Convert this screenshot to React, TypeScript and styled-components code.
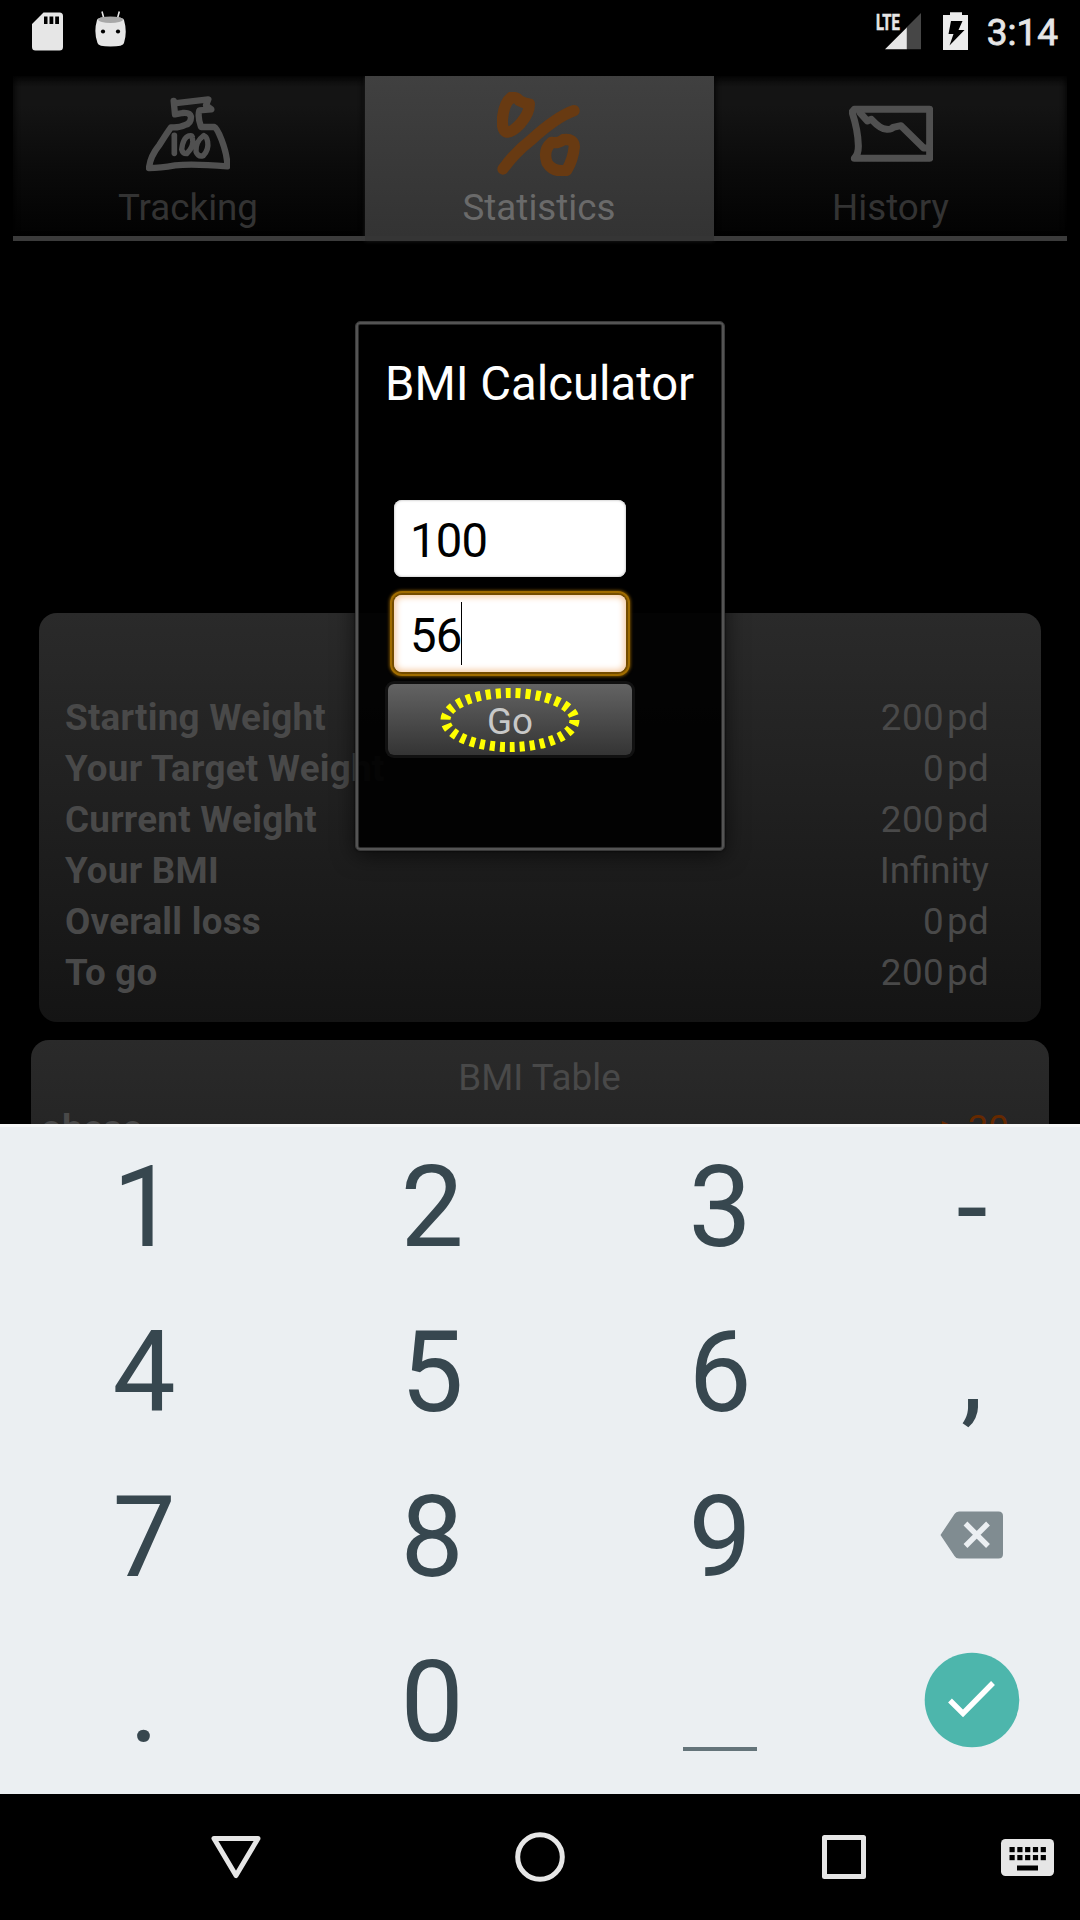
import React from 'react';
import styled, { createGlobalStyle } from 'styled-components';

const GlobalStyle = createGlobalStyle`
  html, body { margin: 0; padding: 0; background: #000; }
  * { box-sizing: border-box; }
  body { font-family: Roboto, "Liberation Sans", sans-serif; }
`;

const Screen = styled.div`
  position: relative;
  width: 1080px;
  height: 1920px;
  overflow: hidden;
  background: #000;
  display: flex;
  flex-direction: column;
`;

/* ---------- status bar ---------- */
const StatusBar = styled.header`
  height: 76px;
  flex: none;
  display: flex;
  justify-content: space-between;
  align-items: flex-start;
  padding: 0 22px 0 32px;
`;

const StatusGroup = styled.div`
  display: flex;
  align-items: flex-start;
  height: 64px;
`;

const StatusIcon = styled.svg<{ $gap?: number }>`
  display: block;
  flex: none;
  margin-right: ${(p) => p.$gap ?? 0}px;
`;

const Signal = styled.div`
  display: flex;
  height: 64px;
  padding-top: 8px;
  margin-right: 22px;
`;

const NetworkType = styled.span`
  display: block;
  width: 9px;
  font-size: 22.5px;
  font-weight: 700;
  line-height: 28px;
  color: #e6e6e6;
  -webkit-text-stroke: 0.6px #e6e6e6;
  transform: scaleX(0.655);
  transform-origin: 0 0;
  white-space: nowrap;
`;

const Clock = styled.time`
  font-size: 37px;
  font-weight: 400;
  -webkit-text-stroke: 0.8px #e6e6e6;
  line-height: 66px;
  color: #e6e6e6;
`;

/* ---------- tabs ---------- */
const TabBar = styled.nav`
  flex: none;
  height: 165px;
  margin: 0 13px;
  display: grid;
  grid-template-columns: 352px 349px 353px;
`;

const Tab = styled.div<{ $active?: boolean; $shift?: number }>`
  display: flex;
  flex-direction: column;
  align-items: center;
  padding: 16px ${(p) => p.$shift ?? 0}px 0 0;
  color: ${(p) => (p.$active ? '#6a6a6a' : '#333')};
  border-bottom: 5px solid ${(p) => (p.$active ? '#353535' : '#3b3b3b')};
  background: ${(p) =>
    p.$active
      ? 'linear-gradient(#404040, #333)'
      : 'linear-gradient(#070707, #141414 7%, #141414 18%, #0a0a0a 60%, #020202)'};
  box-shadow: ${(p) =>
    p.$active ? '0 0 4px rgba(60, 60, 60, 0.5)' : 'inset 3px 0 4px rgba(0, 0, 0, 0.5), inset -3px 0 4px rgba(0, 0, 0, 0.5)'};
  clip-path: inset(0 -4px -4px -4px);
`;

const TabIcon = styled.svg`
  display: block;
  width: 84px;
  height: 84px;
`;

const TabLabel = styled.span`
  margin-top: 9px;
  font-size: 36.75px;
  line-height: 45px;
`;

/* ---------- cards ---------- */
const Content = styled.main`
  flex: none;
  height: 883px;
  overflow: hidden;
  padding-top: 372px;
  display: flex;
  flex-direction: column;
  align-items: center;
  gap: 18px;
`;

const Card = styled.section<{ $width: number; $height: number; $pad: string }>`
  flex: none;
  width: ${(p) => p.$width}px;
  height: ${(p) => p.$height}px;
  padding: ${(p) => p.$pad};
  border-radius: 18px;
  background: linear-gradient(#2a2a2a, #141414);
  color: #494949;
  font-size: 36.75px;
  line-height: 51px;
`;

const CardTitle = styled.div`
  margin-right: -29px;
  text-align: center;
`;

const Row = styled.div`
  display: flex;
  justify-content: space-between;
`;

const Label = styled.span`
  font-weight: 700;
  letter-spacing: 0.25px;
`;

const Value = styled.span<{ $alert?: boolean }>`
  display: flex;
  gap: 3px;
  color: ${(p) => (p.$alert ? '#662900' : 'inherit')};
`;

const Amount = styled.span<{ $numeric: boolean }>`
  letter-spacing: ${(p) => (p.$numeric ? 0.4 : 0)}px;
`;

const Unit = styled.span`
  letter-spacing: 0.3px;
`;

/* ---------- dialog ---------- */
const Dialog = styled.div`
  position: absolute;
  left: 355px;
  top: 321px;
  width: 370px;
  height: 530px;
  padding: 34px 0 0 32px;
  border: 1px solid #3a3a3a;
  border-radius: 5px;
  background: rgba(0, 0, 0, 0.92);
  background-clip: padding-box;
  box-shadow: inset 0 0 0 2px #545454, inset 0 0 0 3px #2a2a2a, 0 4px 22px rgba(0, 0, 0, 0.6), 0 0 2px rgba(0, 0, 0, 0.9);
  display: flex;
  flex-direction: column;
  align-items: flex-start;
`;

const DialogTitle = styled.h1`
  margin: 0 0 88px -3px;
  font-size: 47.25px;
  line-height: 56px;
  font-weight: 400;
  color: #fff;
  white-space: nowrap;
`;

const Field = styled.div<{ $focused?: boolean }>`
  width: 232px;
  height: 77px;
  margin: 0 0 ${(p) => (p.$focused ? 12 : 18)}px 6px;
  padding: 4px 0 0 16px;
  display: flex;
  align-items: center;
  border-radius: 8px;
  background: #fff;
  color: #000;
  font-size: 47.25px;
  letter-spacing: -0.8px;
  box-shadow: ${(p) =>
    p.$focused
      ? 'inset 0 0 6px 2px #f6cba4, 0 0 0 2px #744c00, 0 0 0 4px #a06c00, 0 0 3px 5px #6b4700'
      : 'inset 0 0 2px 1px #d8d8d8'};
`;

const Caret = styled.i`
  width: 1px;
  height: 63px;
  margin: -4px 0 0 -1px;
  background: #000;
`;

const GoButton = styled.div`
  position: relative;
  width: 244px;
  height: 71px;
  display: flex;
  align-items: center;
  justify-content: center;
  padding-top: 4px;
  border-radius: 6px;
  background: linear-gradient(#636363, #343434);
  box-shadow: 0 0 0 3px #111;
  color: #c8c8c8;
  font-size: 36.75px;
`;

const Highlight = styled.svg`
  position: absolute;
  left: 50%;
  top: 50%;
  width: 140px;
  height: 66px;
  margin: -33px 0 0 -70px;
`;

/* ---------- keyboard ---------- */
const Keyboard = styled.div`
  flex: none;
  height: 670px;
  border-top: 3px solid #f6f8f8;
  background: #ebeff2;
  display: grid;
  grid-template-columns: 288px 288px 288px 216px;
  grid-auto-rows: 165px;
`;

const Key = styled.div<{ $drawn: boolean }>`
  display: flex;
  align-items: center;
  justify-content: center;
  padding-bottom: ${(p) => (p.$drawn ? 9 : 4)}px;
  color: #37474f;
  font-size: 112.5px;
  line-height: 159px;
`;

const SpaceMark = styled.i`
  width: 74px;
  height: 4px;
  margin-top: 98px;
  background: #64747a;
`;

/* ---------- navigation ---------- */
const NavBar = styled.footer`
  flex: none;
  height: 126px;
  display: flex;
  align-items: center;
  padding-left: 206px;
`;

const NavIcon = styled.svg<{ $gap: number }>`
  display: block;
  width: 60px;
  height: 60px;
  margin-right: ${(p) => p.$gap}px;
`;

const stats: [string, string, string?][] = [
  ['Starting Weight', '200', 'pd'],
  ['Your Target Weight', '0', 'pd'],
  ['Current Weight', '200', 'pd'],
  ['Your BMI', 'Infinity'],
  ['Overall loss', '0', 'pd'],
  ['To go', '200', 'pd'],
];

const Backspace = () => (
  <svg width="64" height="48" viewBox="0 0 64 48">
    <path d="M19 0.5H58.5Q63 0.5 63 5V43Q63 47.5 58.5 47.5H19Q16 47.5 14.5 45L0.5 24L14.5 3Q16 0.5 19 0.5Z" fill="#808c91" />
    <path d="M25.5 12.5L48 35M48 12.5L25.5 35" stroke="#ebeff2" strokeWidth="5.400" fill="none" />
  </svg>
);

const Confirm = () => (
  <svg width="96" height="96" viewBox="0 0 96 96">
    <circle cx="48" cy="48" r="47.3" fill="#4db6ac" />
    <path d="M26 48.500L39 61.500L69 31" stroke="#fff" strokeWidth="5.4" fill="none" />
  </svg>
);

const keys: React.ReactNode[] = [
  '1', '2', '3', '-',
  '4', '5', '6', ',',
  '7', '8', '9', <Backspace />,
  '.', '0', <SpaceMark />, <Confirm />,
];

export default function App() {
  return (
    <>
      <GlobalStyle />
      <Screen>
        <StatusBar>
          <StatusGroup>
            <StatusIcon width="31" height="64" viewBox="32 0 31 64" $gap={32}>
              <path fillRule="evenodd" fill="#e6e6e6" d="M43.5 12.5H59.5Q63 12.5 63 16V47Q63 50.5 59.5 50.5H35.5Q32 50.5 32 47V24ZM44 16.5V24H47.5V16.5ZM49.5 16.5V24H53.3V16.5ZM55.2 16.5V24H59V16.5Z" />
            </StatusIcon>
            <StatusIcon width="32" height="64" viewBox="95 0 32 64">
              <path d="M102 11.5L104 19M119.3 11.5L117.3 19" stroke="#e6e6e6" strokeWidth="1.6" />
              <path d="M97 20Q97 17 110.500 17Q124 17 124 20Q127.500 32 124 43Q123.500 46.600 110.500 46.600Q98 46.600 97.500 43Q93.500 32 97 20Z" fill="#e6e6e6" />
              <ellipse cx="110.5" cy="19.7" rx="12.3" ry="3.3" fill="#a8a8a8" />
              <circle cx="103" cy="31.500" r="2.100" fill="#000" />
              <circle cx="118" cy="31.500" r="2.100" fill="#000" />
            </StatusIcon>
          </StatusGroup>
          <StatusGroup>
            <Signal>
              <NetworkType>LTE</NetworkType>
              <StatusIcon width="36" height="56" viewBox="885 8 36 56">
                <path d="M906.500 27.500L921 13V49.300H906.500Z" fill="#464646" />
                <path d="M885 49.300L906.800 27.500V49.300Z" fill="#e6e6e6" />
              </StatusIcon>
            </Signal>
            <StatusIcon width="25" height="64" viewBox="943 0 25 64" $gap={19}>
              <path d="M950 12.300H962V15H968V50H943V15H950Z" fill="#ececec" />
              <path d="M951 21H962.500L958.500 30H964.500L949.500 45.500L953.500 34H948.500Z" fill="#000" />
            </StatusIcon>
            <Clock>3:14</Clock>
          </StatusGroup>
        </StatusBar>

        <TabBar>
          <Tab $shift={2}>
            <TabIcon viewBox="438 276 252 252" fill="none" stroke="#505050" strokeWidth="19" strokeLinejoin="round" strokeLinecap="round">
              <path d="M521 303L525 343L548 339Q570 337 573 350Q573 371 555 375Q538 384 513 382Q500 400 478 435Q450 470 447 504Q480 504 525 496Q580 491 682 499Q682 465 665 420Q651 384 643 381H603Q592 350 598 331L634 328L618 316L625 298L522 310" />
              <path d="M523 406V460" strokeWidth="17" />
              <path d="M571 407Q550 408 545 448Q548 461 560 461Q584 439 577 412Q576 406 571 407M611 407Q586 425 588 455Q595 472 610 467Q627 449 623 425Q620 409 611 407" strokeWidth="16" />
            </TabIcon>
            <TabLabel>Tracking</TabLabel>
          </Tab>
          <Tab $active $shift={1}>
            <TabIcon viewBox="441 276 252 252" fill="none" stroke="#683a12" strokeWidth="34" strokeLinejoin="round" strokeLinecap="round">
              <path d="M484 292Q502 292 508 302Q522 310 538 312Q538 340 512 370Q485 399 468 396Q456 390 457 360Q461 309 484 292Z" />
              <path d="M459 507Q494 458 543 420Q620 350 672 332" />
              <path d="M640 419Q672 415 673 440Q669 480 650 511Q610 518 591 488Q578 450 605 427Q624 431 640 419Z" />
            </TabIcon>
            <TabLabel>Statistics</TabLabel>
          </Tab>
          <Tab>
            <TabIcon viewBox="447 276 252 252" fill="none" stroke="#505050" strokeWidth="21" strokeLinejoin="round" strokeLinecap="round">
              <path d="M463 328H689V475H463Q476 462 475 436Q474 390 456 336Z" />
              <path d="M480 338L502 363L514 358Q542 388 560 388Q575 389 579 382L603 377L671 444H685" />
            </TabIcon>
            <TabLabel>History</TabLabel>
          </Tab>
        </TabBar>

        <Content>
          <Card $width={1002} $height={409} $pad="79px 52px 0 26px">
            {stats.map(([label, value, unit]) => (
              <Row key={label}>
                <Label>{label}</Label>
                <Value>
                  <Amount $numeric={!!unit}>{value}</Amount>
                  {unit && <Unit>{unit}</Unit>}
                </Value>
              </Row>
            ))}
          </Card>
          <Card $width={1018} $height={400} $pad="12px 40px 0 10px">
            <CardTitle>BMI Table</CardTitle>
            <Row>
              <Label>obese</Label>
              <Value $alert>&gt; 30</Value>
            </Row>
          </Card>
        </Content>

        <Keyboard>
          {keys.map((k, i) => (
            <Key key={i} $drawn={typeof k !== 'string'}>{k}</Key>
          ))}
        </Keyboard>

        <NavBar>
          <NavIcon viewBox="206 1827 60 60" $gap={244}>
            <path d="M214 1838.500H258L236 1875.500Z" fill="none" stroke="#e6e6e6" strokeWidth="5" strokeLinejoin="round" />
          </NavIcon>
          <NavIcon viewBox="510 1827 60 60" $gap={244}>
            <circle cx="540" cy="1857" r="22.300" fill="none" stroke="#e6e6e6" strokeWidth="5" />
          </NavIcon>
          <NavIcon viewBox="814 1827 60 60" $gap={123}>
            <rect x="824.500" y="1837.500" width="39" height="39" fill="none" stroke="#e6e6e6" strokeWidth="5" strokeLinejoin="round" />
          </NavIcon>
          <NavIcon viewBox="997 1827 60 60" $gap={0}>
            <rect x="1001" y="1839" width="53" height="37" rx="4.500" fill="#e6e6e6" />
            {[0, 1, 2, 3, 4].map((c) => (
              <g key={c}>
                <rect x={1009.5 + c * 7.8} y="1847" width="5.200" height="5.200" />
                <rect x={1009.5 + c * 7.8} y="1855" width="5.200" height="5.200" />
              </g>
            ))}
            <rect x="1017" y="1865.500" width="21" height="5" />
          </NavIcon>
        </NavBar>

        <Dialog>
          <DialogTitle>BMI Calculator</DialogTitle>
          <Field>100</Field>
          <Field $focused>
            56
            <Caret />
          </Field>
          <GoButton>
            Go
            <Highlight viewBox="0 0 140 66">
              <ellipse cx="70" cy="33" rx="64.500" ry="27" fill="none" stroke="#ff0" strokeWidth="10" strokeDasharray="5 5" />
            </Highlight>
          </GoButton>
        </Dialog>
      </Screen>
    </>
  );
}
